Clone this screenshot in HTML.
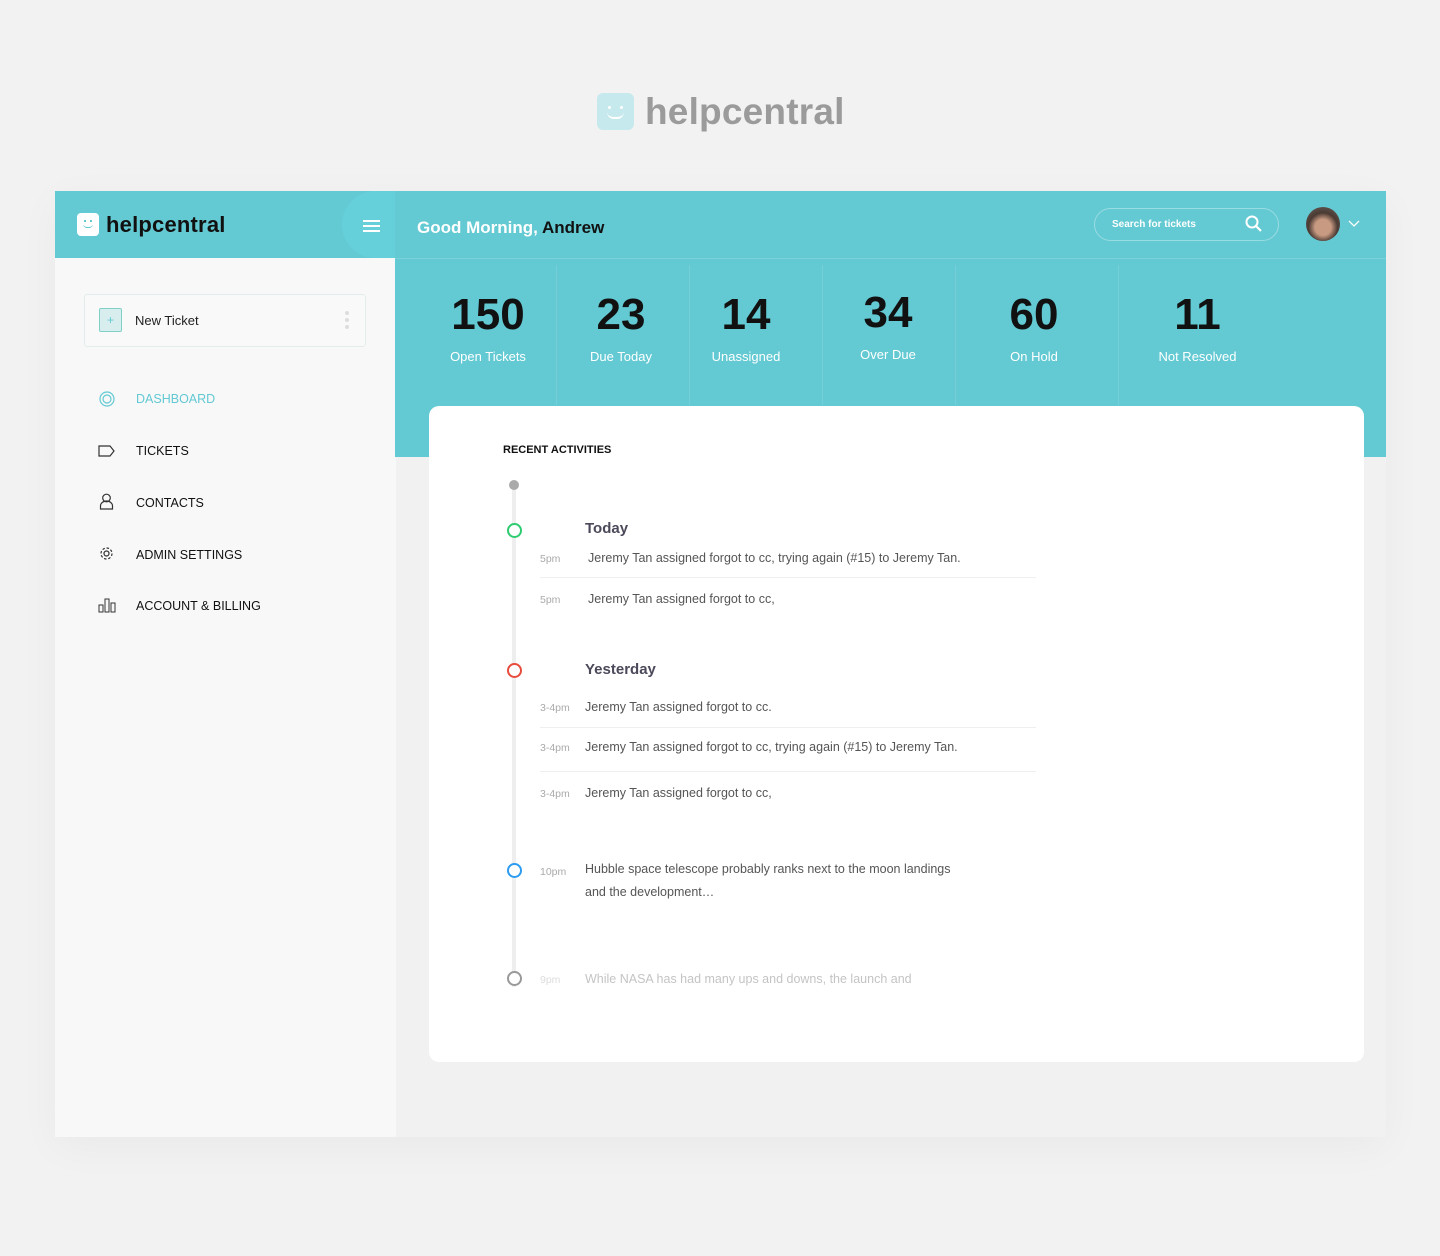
<!DOCTYPE html>
<html><head><meta charset="utf-8"><style>
*{box-sizing:border-box;margin:0;padding:0}
body{width:1440px;height:1256px;background:#f2f2f2;font-family:"Liberation Sans",sans-serif;position:relative;overflow:hidden}
.abs{position:absolute}
.frame{left:55px;top:191px;width:1331px;height:946px;background:#f1f1f1;box-shadow:0 10px 40px rgba(0,0,0,.04)}
.side{left:55px;top:258px;width:341px;height:879px;background:#f8f8f8}
.topl{left:55px;top:191px;width:340px;height:67px;background:#63c9d3}
.topr{left:395px;top:191px;width:991px;height:266px;background:#63c9d3}
.stat{position:absolute;top:288px;text-align:center;color:#fff;font-size:13px}
.stat b{display:block;color:#111;font-size:44px;font-weight:bold;line-height:54px;margin-bottom:7px}
.vl{position:absolute;top:265px;width:1px;height:140px;background:rgba(255,255,255,.12)}
.nav{position:absolute;left:136px;font-size:12.5px;color:#111}
.card{left:429px;top:406px;width:935px;height:656px;background:#fff;border-radius:10px}
.t{position:absolute;font-size:12.5px;color:#555}
.tm{position:absolute;font-size:10.5px;color:#aaa}
.hr{position:absolute;left:540px;width:496px;height:1px;background:#efefef}
.dot{position:absolute;left:507px;width:15px;height:15px;border-radius:50%;background:#fff;border:2px solid}
</style></head><body>
<div class="abs" style="left:597px;top:93px;width:37px;height:37px;border-radius:6px;background:#c5e9ec"></div>
<div class="abs" style="left:608px;top:106px;width:3px;height:3px;border-radius:50%;background:#fff"></div>
<div class="abs" style="left:620px;top:106px;width:3px;height:3px;border-radius:50%;background:#fff"></div>
<div class="abs" style="left:607px;top:112px;width:17px;height:7px;border-bottom:2px solid #fff;border-radius:0 0 9px 9px"></div>
<div class="abs" style="left:645px;top:91px;font-size:37px;font-weight:bold;color:#9b9b9b;letter-spacing:0.2px">helpcentral</div>

<div class="abs frame"></div>
<div class="abs side"></div>
<div class="abs topl"></div>
<div class="abs topr"></div>
<div class="abs" style="left:342px;top:191px;width:53px;height:67px;background:#66d0da;border-radius:40px 0 0 40px"></div>
<div class="abs" style="left:395px;top:258px;width:991px;height:1px;background:rgba(255,255,255,.15)"></div>
<div class="abs" style="left:77px;top:213px;width:22px;height:23px;border-radius:4px;background:#fff"></div>
<div class="abs" style="left:84px;top:220px;width:2px;height:2px;background:#63c9d3"></div>
<div class="abs" style="left:90px;top:220px;width:2px;height:2px;background:#63c9d3"></div>
<div class="abs" style="left:83px;top:224px;width:10px;height:4px;border-bottom:1.5px solid #63c9d3;border-radius:0 0 5px 5px"></div>
<div class="abs" style="left:106px;top:212px;font-size:22px;font-weight:bold;color:#111;letter-spacing:0.2px">helpcentral</div>
<div class="abs" style="left:363px;top:220px;width:17px;height:2px;background:#fff;box-shadow:0 5px 0 #fff,0 10px 0 #fff"></div>
<div class="abs" style="left:417px;top:218px;font-size:17px;font-weight:bold;color:#fff">Good Morning, <span style="color:#111">Andrew</span></div>
<div class="abs" style="left:1094px;top:208px;width:185px;height:33px;border:1px solid rgba(255,255,255,.35);border-radius:17px"></div>
<div class="abs" style="left:1112px;top:219px;font-size:10px;font-weight:bold;color:#fff">Search for tickets</div>
<svg class="abs" style="left:1245px;top:215px" width="18" height="18" viewBox="0 0 18 18"><circle cx="7" cy="7" r="5.5" fill="none" stroke="#fff" stroke-width="2"/><path d="M11 11l5 5" stroke="#fff" stroke-width="2.2"/></svg>
<div class="abs" style="left:1306px;top:207px;width:34px;height:34px;border-radius:50%;background:radial-gradient(circle at 50% 60%,#c99a82 0 30%,#4a3a33 55%,#6d6660 100%)"></div>
<svg class="abs" style="left:1348px;top:220px" width="12" height="8"><path d="M1 1l5 5 5-5" fill="none" stroke="#fff" stroke-width="1.3"/></svg>

<div class="stat" style="left:428px;width:120px"><b>150</b>Open Tickets</div>
<div class="stat" style="left:566px;width:110px"><b>23</b>Due Today</div>
<div class="stat" style="left:696px;width:100px"><b>14</b>Unassigned</div>
<div class="stat" style="left:838px;width:100px;top:286px"><b>34</b>Over Due</div>
<div class="stat" style="left:984px;width:100px;top:288px"><b>60</b>On Hold</div>
<div class="stat" style="left:1140px;width:115px;top:288px"><b>11</b>Not Resolved</div>
<div class="vl" style="left:556px"></div><div class="vl" style="left:689px"></div><div class="vl" style="left:822px"></div><div class="vl" style="left:955px"></div><div class="vl" style="left:1118px"></div>

<div class="abs" style="left:84px;top:294px;width:282px;height:53px;border:1px solid #e3ecec;border-radius:3px;background:#f9f9f9"></div>
<div class="abs" style="left:99px;top:308px;width:23px;height:24px;border:1px solid #7fd0c6;background:#d8eeee;border-radius:2px;color:#63c9d3;font-size:12px;text-align:center;line-height:22px">+</div>
<div class="abs" style="left:135px;top:313px;font-size:13px;color:#222">New Ticket</div>
<div class="abs" style="left:345px;top:311px;width:4px;height:4px;border-radius:50%;background:#ddd;box-shadow:0 7px 0 #ddd,0 14px 0 #ddd"></div>

<svg class="abs" style="left:98px;top:390px" width="18" height="18"><circle cx="9" cy="9" r="7" fill="none" stroke="#63c9d3" stroke-width="1.2"/><circle cx="9" cy="9" r="4" fill="none" stroke="#63c9d3" stroke-width="1.2"/></svg>
<div class="nav" style="top:392px;color:#63c9d3">DASHBOARD</div>
<svg class="abs" style="left:98px;top:444px" width="18" height="14"><path d="M1 2h11l4 5-4 5H1z" fill="none" stroke="#333" stroke-width="1.2"/></svg>
<div class="nav" style="top:444px">TICKETS</div>
<svg class="abs" style="left:99px;top:493px" width="15" height="17"><circle cx="7.5" cy="5" r="3.8" fill="none" stroke="#333" stroke-width="1.2"/><path d="M1.5 16v-3a6 5 0 0 1 12 0v3z" fill="none" stroke="#333" stroke-width="1.2"/></svg>
<div class="nav" style="top:496px">CONTACTS</div>
<svg class="abs" style="left:98px;top:545px" width="17" height="17" viewBox="0 0 17 17"><circle cx="8.5" cy="8.5" r="5.5" fill="none" stroke="#333" stroke-width="1.2" stroke-dasharray="2.5 1.8"/><circle cx="8.5" cy="8.5" r="2.5" fill="none" stroke="#333" stroke-width="1.2"/></svg>
<div class="nav" style="top:548px">ADMIN SETTINGS</div>
<svg class="abs" style="left:98px;top:597px" width="18" height="16"><rect x="1" y="8" width="4" height="7" fill="none" stroke="#333"/><rect x="7" y="2" width="4" height="13" fill="none" stroke="#333"/><rect x="13" y="6" width="4" height="9" fill="none" stroke="#333"/></svg>
<div class="nav" style="top:599px">ACCOUNT &amp; BILLING</div>

<div class="abs card"></div>
<div class="abs" style="left:503px;top:444px;font-size:11px;font-weight:bold;color:#111">RECENT ACTIVITIES</div>
<div class="abs" style="left:512px;top:487px;width:4px;height:500px;background:#eee"></div>
<div class="abs" style="left:509px;top:480px;width:10px;height:10px;border-radius:50%;background:#aaa"></div>
<div class="dot" style="top:523px;border-color:#2ecc71"></div>
<div class="dot" style="top:663px;border-color:#e74c3c"></div>
<div class="dot" style="top:863px;border-color:#2d9cf0"></div>
<div class="dot" style="top:971px;border-color:#999"></div>

<div class="t" style="left:585px;top:520px;font-size:15px;font-weight:bold;color:#4a4a5a">Today</div>
<div class="tm" style="left:540px;top:553px">5pm</div><div class="t" style="left:588px;top:551px">Jeremy Tan assigned forgot to cc, trying again (#15) to Jeremy Tan.</div>
<div class="hr" style="top:577px"></div>
<div class="tm" style="left:540px;top:594px">5pm</div><div class="t" style="left:588px;top:592px">Jeremy Tan assigned forgot to cc,</div>

<div class="t" style="left:585px;top:661px;font-size:15px;font-weight:bold;color:#4a4a5a">Yesterday</div>
<div class="tm" style="left:540px;top:702px">3-4pm</div><div class="t" style="left:585px;top:700px">Jeremy Tan assigned forgot to cc.</div>
<div class="hr" style="top:727px"></div>
<div class="tm" style="left:540px;top:742px">3-4pm</div><div class="t" style="left:585px;top:740px">Jeremy Tan assigned forgot to cc, trying again (#15) to Jeremy Tan.</div>
<div class="hr" style="top:771px"></div>
<div class="tm" style="left:540px;top:788px">3-4pm</div><div class="t" style="left:585px;top:786px">Jeremy Tan assigned forgot to cc,</div>

<div class="tm" style="left:540px;top:866px">10pm</div><div class="t" style="left:585px;top:858px;line-height:23px">Hubble space telescope probably ranks next to the moon landings<br>and the development…</div>
<div class="tm" style="left:540px;top:974px;color:#ddd">9pm</div><div class="t" style="left:585px;top:972px;color:#c4c4c4">While NASA has had many ups and downs, the launch and</div>
</body></html>
